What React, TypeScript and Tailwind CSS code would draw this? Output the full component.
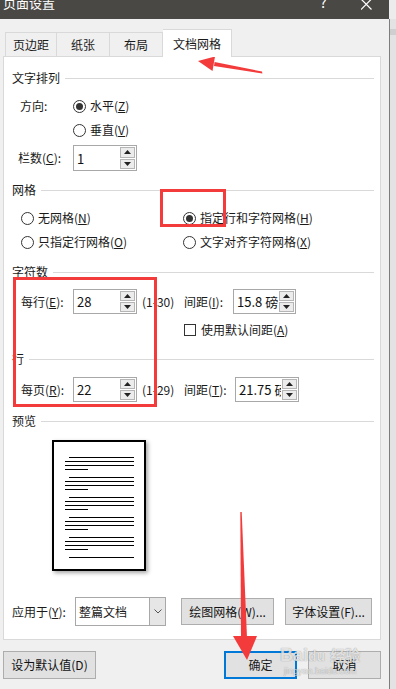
import React from "react";

const Radio = ({ checked }: { checked?: boolean }) => (
  <span className="flex h-[13px] w-[13px] shrink-0 items-center justify-center rounded-full border border-[#333] bg-white">
    {checked && <span className="h-[7px] w-[7px] rounded-full bg-[#333]" />}
  </span>
);

const Heading = ({ label, className }: { label: string; className: string }) => (
  <div className={`flex h-[16px] items-center pl-[8px] pr-[6px] ${className}`}>
    <span className="text-[12px] leading-none text-[#1a1a1a]">{label}</span>
    <span className="ml-[5px] h-px flex-1 bg-[#d9d9d9]" />
  </div>
);

const Arrow = ({ up }: { up?: boolean }) => (
  <svg width="7" height="4" viewBox="0 0 7 4">
    <path d={up ? "M0 4 L3.5 0 L7 4Z" : "M0 0 L3.5 4 L7 0Z"} fill="#222" />
  </svg>
);

const SpinBox = ({ value, className }: { value: string; className: string }) => (
  <div className={`flex h-[25px] border border-[#a8a8a8] bg-white ${className}`}>
    <div className="flex flex-1 items-center overflow-hidden whitespace-nowrap pl-[3px] text-[13px] leading-none text-[#111]">
      {value}
    </div>
    <div className="flex w-[17px] flex-col gap-px p-px">
      <div className="flex flex-1 items-center justify-center border border-[#b5b5b5] bg-[#ececec]">
        <Arrow up />
      </div>
      <div className="flex flex-1 items-center justify-center border border-[#b5b5b5] bg-[#ececec]">
        <Arrow />
      </div>
    </div>
  </div>
);

const Button = ({ label, className }: { label: string; className: string }) => (
  <div
    className={`flex items-center justify-center border border-[#adadad] bg-[#e1e1e1] text-[12px] leading-none text-[#111] ${className}`}
  >
    {label}
  </div>
);

const Line = ({ className }: { className: string }) => <div className={`h-px bg-black ${className}`} />;

const TextBlock = () => (
  <div className="flex flex-col gap-[3px]">
    <Line className="ml-[15px] w-[65px]" />
    <Line className="ml-[11px] w-[69px]" />
    <Line className="ml-[11px] w-[69px]" />
    <Line className="ml-[11px] w-[23px]" />
  </div>
);

export default function App() {
  return (
    <div className="relative flex h-[689px] w-[396px] overflow-hidden bg-[#f0f0f0] font-['Noto_Sans_CJK_SC',sans-serif] text-[#1a1a1a]">
      <div className="flex w-[389px] flex-col">
        {/* title bar */}
        <div className="flex h-[19px] items-start bg-[#4a4845] text-white">
          <span className="-mt-[4px] ml-[3px] text-[13px] leading-[13px]">页面设置</span>
          <span className="-mt-[5px] ml-[265px] text-[14px] leading-[14px]">?</span>
          <svg className="ml-[34px]" width="11" height="11" viewBox="0 0 11 11">
            <path d="M0 -1 L10.5 9.5 M10.5 -1 L0 9.5" stroke="#fff" strokeWidth="1.2" />
          </svg>
        </div>

        {/* tabs */}
        <div className="relative z-10 -mb-px flex items-end pl-[5px] pt-[10px] text-[12px] leading-none">
          <div className="flex h-[25px] w-[52px] items-center justify-center border border-b-0 border-[#d9d9d9]">页边距</div>
          <div className="flex h-[25px] w-[53px] items-center justify-center border border-b-0 border-l-0 border-[#d9d9d9]">纸张</div>
          <div className="flex h-[25px] w-[53px] items-center justify-center border border-b-0 border-l-0 border-[#d9d9d9]">布局</div>
          <div className="flex h-[28px] w-[69px] items-center justify-center border border-b-0 border-l-0 border-[#d9d9d9] bg-white">文档网格</div>
        </div>

        {/* panel */}
        <div className="ml-[3px] flex w-[378px] flex-col border border-[#d9d9d9] bg-white pb-[13px] text-[12px] leading-none">
          <Heading label="文字排列" className="mt-[13px]" />
          <div className="mt-[10px] flex h-[20px] items-center pl-[16px]">
            <span className="w-[53px]">方向:</span>
            <Radio checked />
            <span className="ml-[4px]">水平(<u>Z</u>)</span>
          </div>
          <div className="mt-[4px] flex h-[20px] items-center pl-[69px]">
            <Radio />
            <span className="ml-[4px]">垂直(<u>V</u>)</span>
          </div>
          <div className="mt-[5px] flex h-[26px] items-center pl-[14px]">
            <span className="w-[55px]">栏数(<u>C</u>):</span>
            <SpinBox value="1" className="h-[26px] w-[64px]" />
          </div>

          <Heading label="网格" className="mt-[11px]" />
          <div className="mt-[10px] flex h-[20px] items-center pl-[17px]">
            <div className="flex w-[162px] items-center">
              <Radio />
              <span className="ml-[4px]">无网格(<u>N</u>)</span>
            </div>
            <Radio checked />
            <span className="ml-[4px]">指定行和字符网格(<u>H</u>)</span>
          </div>
          <div className="mt-[4px] flex h-[20px] items-center pl-[17px]">
            <div className="flex w-[162px] items-center">
              <Radio />
              <span className="ml-[4px]">只指定行网格(<u>O</u>)</span>
            </div>
            <Radio />
            <span className="ml-[4px]">文字对齐字符网格(<u>X</u>)</span>
          </div>

          <Heading label="字符数" className="mt-[12px]" />
          <div className="mt-[9px] flex h-[25px] items-center pl-[17px]">
            <span className="w-[52px]">每行(<u>E</u>):</span>
            <SpinBox value="28" className="w-[64px]" />
            <span className="ml-[5px] w-[42px]">(1-30)</span>
            <span className="w-[49px]">间距(<u>I</u>):</span>
            <SpinBox value="15.8 磅" className="w-[63px]" />
          </div>
          <div className="mt-[8px] flex h-[16px] items-center pl-[180px]">
            <span className="h-[12px] w-[12px] border border-[#333] bg-white" />
            <span className="ml-[5px]">使用默认间距(<u>A</u>)</span>
          </div>

          <Heading label="行" className="mt-[13px]" />
          <div className="mt-[10px] flex h-[25px] items-center pl-[17px]">
            <span className="w-[52px]">每页(<u>R</u>):</span>
            <SpinBox value="22" className="w-[64px]" />
            <span className="ml-[5px] w-[42px]">(1-29)</span>
            <span className="w-[51px]">间距(<u>T</u>):</span>
            <SpinBox value="21.75 磅" className="w-[64px]" />
          </div>

          <Heading label="预览" className="mt-[11px]" />
          <div className="ml-[48px] mt-[11px] flex h-[131px] w-[94px] flex-col gap-[7px] border-2 border-black bg-white pt-[15px] shadow-[2px_2px_4px_rgba(0,0,0,0.35)]">
            <TextBlock />
            <TextBlock />
            <TextBlock />
            <TextBlock />
            <TextBlock />
            <Line className="ml-[15px] w-[65px]" />
          </div>

          <div className="mt-[26px] flex h-[29px] items-center pl-[8px]">
            <span className="w-[63px]">应用于(<u>Y</u>):</span>
            <div className="flex h-[29px] w-[91px] border border-[#a8a8a8] bg-white">
              <span className="flex flex-1 items-center pl-[3px] text-[12px]">整篇文档</span>
              <span className="flex w-[16px] items-center justify-center border-l border-[#a8a8a8] bg-[#e6e6e6]">
                <svg width="8" height="5" viewBox="0 0 8 5">
                  <path d="M0.5 0.5 L4 4 L7.5 0.5" fill="none" stroke="#555" strokeWidth="1" />
                </svg>
              </span>
            </div>
            <Button label="绘图网格(W)..." className="ml-[15px] h-[27px] w-[93px]" />
            <Button label="字体设置(F)..." className="ml-[11px] h-[27px] w-[87px]" />
          </div>
        </div>

        {/* bottom buttons */}
        <div className="mt-[11px] flex h-[28px]">
          <Button label="设为默认值(D)" className="ml-[3px] w-[93px]" />
          <div className="ml-[128px] flex w-[73px] items-center justify-center border-2 border-[#0078d7] bg-[#e1e1e1] text-[12px] leading-none">
            确定
          </div>
          <Button label="取消" className="ml-[11px] w-[73px]" />
        </div>
      </div>

      {/* window edge at right */}
      <div className="flex w-[7px] flex-col">
        <div className="h-[19px] bg-[#ececec]" />
        <div className="flex-1 border-l border-[#7d7d7d] bg-[#e3e3e3] pt-[10px]">
          <div className="h-[6px] bg-[#cfcfcf]" />
        </div>
      </div>

      {/* watermark */}
      <div className="pointer-events-none absolute left-[280px] top-[645px] flex flex-col text-[rgba(255,255,255,0.75)] [text-shadow:0_0_1px_rgba(0,0,0,0.45)]">
        <span className="font-['Liberation_Sans',sans-serif] text-[18px] font-bold leading-[20px]">
          Bai<span className="text-[14px]">du</span> <span className="font-['Noto_Sans_CJK_SC',sans-serif] text-[15px]">经验</span>
        </span>
        <span className="ml-[4px] font-['Liberation_Sans',sans-serif] text-[9px] leading-[10px]">jingyan.baidu.com</span>
      </div>

      {/* red annotations */}
      <svg className="pointer-events-none absolute left-0 top-0" width="396" height="689" viewBox="0 0 396 689">
        <rect x="161.5" y="190.5" width="63" height="35" fill="none" stroke="#f43b3b" strokeWidth="3" />
        <rect x="14.5" y="278.5" width="141" height="127" fill="none" stroke="#f43b3b" strokeWidth="3" />
        <path d="M262 71.5 L262.4 73.5 L214 66 L214.6 62 Z" fill="#f43b3b" />
        <path d="M198 61 L215 56.5 L212.5 71 Z" fill="#f43b3b" />
        <path d="M240.3 512 L241.7 512 L247 638 L241 638 Z" fill="#f43b3b" />
        <path d="M233 636 L257 636 L247 660 Z" fill="#f43b3b" />
      </svg>
    </div>
  );
}
